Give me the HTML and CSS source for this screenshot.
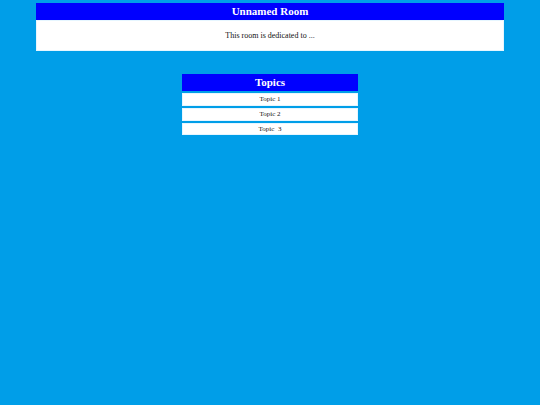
FILE: index.html
```
<!DOCTYPE html>
<html>
<head>
<meta charset="utf-8">
<link rel="stylesheet" href="styles.css">
</head>
<body>
<div class="room">
  <div class="room-title">Unnamed Room</div>
  <div class="room-desc">This room is dedicated to ...</div>
</div>
<div class="topics">
  <div class="topics-title">Topics</div>
  <div class="topic">Topic 1</div>
  <div class="topic">Topic 2</div>
  <div class="topic">Topic&nbsp; 3</div>
</div>
</body>
</html>
```
FILE: styles.css
```
html, body {
  margin: 0;
  padding: 0;
  background: #009ee8;
  font-family: "Liberation Serif", "Times New Roman", serif;
}
body {
  padding-top: 3px;
}
.room {
  width: 468px;
  margin: 0 auto;
}
.room-title {
  background: #0000ff;
  color: #ffffff;
  font-weight: bold;
  font-size: 11px;
  height: 17px;
  line-height: 17px;
  text-align: center;
}
.room-desc {
  background: #ffffff;
  color: #111111;
  font-size: 8px;
  height: 31px;
  line-height: 31px;
  text-align: center;
  box-shadow: inset 0 0 0 1px #e6f6ff;
}
.topics {
  width: 176px;
  margin: 23px auto 0;
  display: flex;
  flex-direction: column;
  gap: 2.25px;
}
.topics-title {
  background: #0000ff;
  color: #ffffff;
  font-weight: bold;
  font-size: 11px;
  height: 17px;
  line-height: 17px;
  text-align: center;
}
.topic {
  background: #ffffff;
  color: #111111;
  font-size: 7px;
  height: 12.5px;
  line-height: 12.5px;
  text-align: center;
  box-shadow: inset 0 0 0 1px #e6f6ff;
}
```
